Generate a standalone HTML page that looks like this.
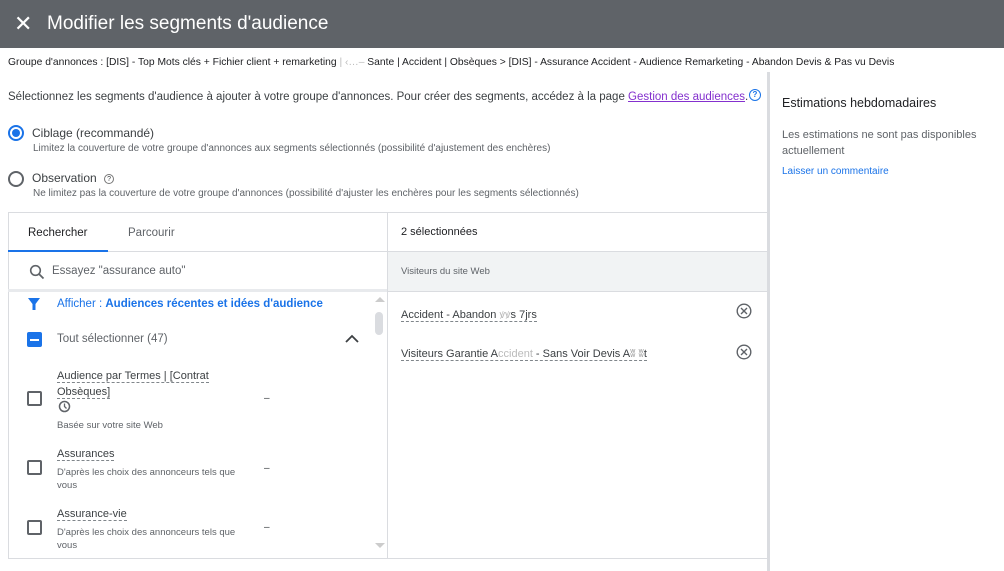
<!DOCTYPE html>
<html><head><meta charset="utf-8"><style>
*{box-sizing:border-box;margin:0;padding:0}
body{width:1004px;height:571px;overflow:hidden;background:#fff;font-family:"Liberation Sans",Arial,sans-serif;color:#3c4043;position:relative}
.a{position:absolute;white-space:nowrap}
.dash{border-bottom:1px dashed #80868b}
.cb{position:absolute;width:15px;height:15px;border:2px solid #5f6368;border-radius:2px}
.sm{font-size:10px;color:#5f6368}
</style></head><body>
<div class="a" style="left:0;top:0;width:1004px;height:48px;background:#5f6368"></div>
<div class="a" style="left:14px;top:11px;font-size:22px;color:#fff">✕</div>
<div class="a" style="left:47px;top:13px;font-size:19px;color:#fff">Modifier les segments d'audience</div>
<div class="a" style="left:767px;top:72px;width:3px;height:499px;background:#dadce0"></div>
<div class="a" style="left:8px;top:57px;font-size:10.3px;color:#202124">Groupe d'annonces : [DIS] - Top Mots clés + Fichier client + remarketing <span style="color:#bbb">| ‹…–</span> Sante | Accident | Obsèques &gt; [DIS] - Assurance Accident - Audience Remarketing - Abandon Devis &amp; Pas vu Devis</div>
<div class="a" style="left:8px;top:91px;font-size:11.5px">Sélectionnez les segments d'audience à ajouter à votre groupe d'annonces. Pour créer des segments, accédez à la page <span style="color:#8430ce;text-decoration:underline">Gestion des audiences</span>.</div>
<div class="a" style="left:749px;top:89px;width:12px;height:12px;border:1.5px solid #1a73e8;border-radius:50%;font-size:8px;color:#1a73e8;text-align:center;line-height:9px;font-weight:bold">?</div>
<div class="a" style="left:8px;top:125px;width:16px;height:16px;border:2px solid #1a73e8;border-radius:50%"><div style="margin:2px;width:8px;height:8px;border-radius:50%;background:#1a73e8"></div></div>
<div class="a" style="left:32px;top:126px;font-size:12px">Ciblage (recommandé)</div>
<div class="a sm" style="left:33px;top:143px">Limitez la couverture de votre groupe d'annonces aux segments sélectionnés (possibilité d'ajustement des enchères)</div>
<div class="a" style="left:8px;top:171px;width:16px;height:16px;border:2px solid #5f6368;border-radius:50%"></div>
<div class="a" style="left:32px;top:171px;font-size:12px">Observation <span style="display:inline-block;width:10px;height:10px;border:1px solid #777;border-radius:50%;font-size:7px;text-align:center;line-height:9px;vertical-align:1px;margin-left:4px">?</span></div>
<div class="a sm" style="left:33px;top:188px">Ne limitez pas la couverture de votre groupe d'annonces (possibilité d'ajuster les enchères pour les segments sélectionnés)</div>
<div class="a" style="left:8px;top:212px;width:760px;height:347px;border:1px solid #dadce0"></div>
<div class="a" style="left:387px;top:212px;width:1px;height:347px;background:#dadce0"></div>
<div class="a" style="left:8px;top:251px;width:760px;height:1px;background:#dadce0"></div>
<div class="a" style="left:8px;top:250px;width:100px;height:2px;background:#1a73e8"></div>
<div class="a" style="left:28px;top:227px;font-size:11.5px;color:#202124">Rechercher</div>
<div class="a" style="left:128px;top:227px;font-size:11.5px;color:#5f6368">Parcourir</div>
<svg class="a" style="left:29px;top:264px" width="16" height="16" viewBox="0 0 16 16"><circle cx="6.5" cy="6.5" r="4.8" fill="none" stroke="#5f6368" stroke-width="1.6"/><path d="M10 10l4.5 4.5" stroke="#5f6368" stroke-width="1.8"/></svg>
<div class="a" style="left:52px;top:265px;font-size:11.5px;color:#5f6368">Essayez "assurance auto"</div>
<div class="a" style="left:8px;top:289px;width:379px;height:3px;background:#e8eaed"></div>
<svg class="a" style="left:27px;top:297px" width="14" height="14" viewBox="0 0 14 14"><path d="M1 1h12L8.5 7v6h-3V7z" fill="#1a73e8"/></svg>
<div class="a" style="left:57px;top:298px;font-size:11.5px;color:#1a73e8">Afficher : <b>Audiences récentes et idées d'audience</b></div>
<div class="a" style="left:375px;top:297px;width:0;height:0;border:5px solid transparent;border-bottom-color:#ccc;border-top:0"></div>
<div class="a" style="left:375px;top:312px;width:8px;height:23px;border-radius:4px;background:#dadce0"></div>
<div class="a" style="left:375px;top:543px;width:0;height:0;border:5px solid transparent;border-top-color:#ccc;border-bottom:0"></div>
<div class="a" style="left:27px;top:332px;width:15px;height:15px;background:#1a73e8;border-radius:2px"><div style="margin:6.5px 3px;height:2px;background:#fff"></div></div>
<div class="a" style="left:57px;top:333px;font-size:11.5px;color:#5f6368">Tout sélectionner (47)</div>
<svg class="a" style="left:345px;top:334px" width="14" height="10" viewBox="0 0 14 10"><path d="M1 8l6-6 6 6" fill="none" stroke="#3c4043" stroke-width="1.8"/></svg>
<div class="cb" style="left:27px;top:391px"></div>
<div class="a" style="left:57px;top:368px;font-size:11px;line-height:16px"><span class="dash">Audience par Termes | [Contrat</span><br><span class="dash">Obsèques]</span></div>
<svg class="a" style="left:58px;top:400px" width="13" height="13" viewBox="0 0 13 13"><circle cx="6.5" cy="6.5" r="5" fill="none" stroke="#5f6368" stroke-width="1.5"/><path d="M6.5 3.5v3l2 2" fill="none" stroke="#5f6368" stroke-width="1.3"/></svg>
<div class="a sm" style="left:57px;top:420px;font-size:9.5px">Basée sur votre site Web</div>
<div class="a" style="left:264px;top:393px;font-size:10px">–</div>
<div class="cb" style="left:27px;top:460px"></div>
<div class="a" style="left:57px;top:448px;font-size:11px"><span class="dash">Assurances</span></div>
<div class="a sm" style="left:57px;top:466px;font-size:9.5px;line-height:13px">D'après les choix des annonceurs tels que<br>vous</div>
<div class="a" style="left:264px;top:463px;font-size:10px">–</div>
<div class="cb" style="left:27px;top:520px"></div>
<div class="a" style="left:57px;top:508px;font-size:11px"><span class="dash">Assurance-vie</span></div>
<div class="a sm" style="left:57px;top:526px;font-size:9.5px;line-height:13px">D'après les choix des annonceurs tels que<br>vous</div>
<div class="a" style="left:264px;top:522px;font-size:10px">–</div>
<div class="a" style="left:401px;top:226px;font-size:11px;color:#202124">2 sélectionnées</div>
<div class="a" style="left:388px;top:252px;width:379px;height:40px;background:#f1f3f4;border-bottom:1px solid #dadce0"></div>
<div class="a" style="left:401px;top:266px;font-size:9.5px;color:#5f6368">Visiteurs du site Web</div>
<div class="a" style="left:401px;top:307px;font-size:11px"><span class="dash">Accident - Abandon <span style="color:#bbb">ꝟꝟ</span>s 7jrs</span></div>
<div class="a" style="left:401px;top:348px;font-size:11px"><span class="dash">Visiteurs Garantie A<span style="color:#bbb">ccident</span> - Sans Voir Devis A<span style="color:#999">ʬ ʬ</span>t</span></div>
<svg class="a" style="left:736px;top:303px" width="16" height="16" viewBox="0 0 16 16"><circle cx="8" cy="8" r="6.8" fill="none" stroke="#5f6368" stroke-width="1.4"/><path d="M5 5l6 6M11 5l-6 6" stroke="#5f6368" stroke-width="1.4"/></svg>
<svg class="a" style="left:736px;top:344px" width="16" height="16" viewBox="0 0 16 16"><circle cx="8" cy="8" r="6.8" fill="none" stroke="#5f6368" stroke-width="1.4"/><path d="M5 5l6 6M11 5l-6 6" stroke="#5f6368" stroke-width="1.4"/></svg>
<div class="a" style="left:782px;top:96px;font-size:12.5px;color:#202124">Estimations hebdomadaires</div>
<div class="a" style="left:782px;top:127px;font-size:11px;line-height:16px;color:#5f6368">Les estimations ne sont pas disponibles<br>actuellement</div>
<div class="a" style="left:782px;top:166px;font-size:10px;color:#1a73e8">Laisser un commentaire</div>
</body></html>
